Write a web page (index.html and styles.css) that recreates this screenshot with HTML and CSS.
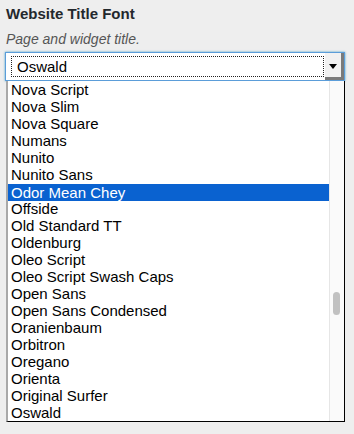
FILE: index.html
```html
<!DOCTYPE html>
<html lang="en">
<head>
  <meta charset="UTF-8" />
  <meta name="viewport" content="width=device-width, initial-scale=1" />
  <title>Website Title Font</title>
  <link rel="stylesheet" href="styles.css">
</head>
<body>
  <div class="field">
    <h3 class="field-title">Website Title Font</h3>
    <p class="field-desc">Page and widget title.</p>

    <div class="select">
      <div class="select-value"><span>Oswald</span></div>
      <div class="select-arrow"><span class="arrow"></span></div>
    </div>

    <div class="dropdown">
      <ul class="options">
        <li>Nova Script</li>
        <li>Nova Slim</li>
        <li>Nova Square</li>
        <li>Numans</li>
        <li>Nunito</li>
        <li>Nunito Sans</li>
        <li class="selected">Odor Mean Chey</li>
        <li>Offside</li>
        <li>Old Standard TT</li>
        <li>Oldenburg</li>
        <li>Oleo Script</li>
        <li>Oleo Script Swash Caps</li>
        <li>Open Sans</li>
        <li>Open Sans Condensed</li>
        <li>Oranienbaum</li>
        <li>Orbitron</li>
        <li>Oregano</li>
        <li>Orienta</li>
        <li>Original Surfer</li>
        <li>Oswald</li>
      </ul>
      <div class="scrollbar">
        <div class="thumb"></div>
      </div>
    </div>
  </div>
</body>
</html>
```

FILE: styles.css
```css
body {
  margin: 0;
  background-color: #eeeeee;
  font-family: "Liberation Sans", Arial, sans-serif;
  color: #23282d;
}

.field {
  padding: 4px 9px 0 5px;
}

.field-title {
  margin: 0 0 0 1px;
  font-size: 15px;
  font-weight: bold;
  line-height: 20px;
}

.field-desc {
  margin: 7px 0 0 1px;
  font-size: 14px;
  font-style: italic;
  line-height: 16px;
  color: #555;
}

.select {
  display: flex;
  height: 27px;
  margin-top: 5px;
  background: white;
  border: 1px solid #5b9dd9;
  box-shadow: 0 0 2px rgba(30, 140, 190, 0.8);
}

.select-value {
  flex: 1;
  display: flex;
  align-items: center;
  margin: 3px 0 3px 5px;
  padding-left: 5px;
  border: 1px dotted #222;
  font-size: 15px;
  color: #000;
}

.select-arrow {
  width: 16px;
  display: flex;
  align-items: center;
  justify-content: center;
  background: #f1f1f1;
  border-right: 3px solid #7a7a7a;
  border-bottom: 3px solid #7a7a7a;
  margin-left: 1px;
}

.arrow {
  width: 0;
  height: 0;
  border-left: 4px solid transparent;
  border-right: 4px solid transparent;
  border-top: 5px solid #000;
  margin-top: 2px;
}

.dropdown {
  display: flex;
  margin-left: 1px;
  height: 340px;
  background: white;
  border-left: 2px solid #a9a9a9;
  border-right: 1px solid #000;
  border-bottom: 1px solid #000;
}

.options {
  flex: 1;
  list-style: none;
  margin: 0;
  padding: 0;
  font-size: 15px;
  line-height: 17px;
  color: #000;
}

.options li {
  padding-left: 3px;
  white-space: nowrap;
}

.options li.selected {
  margin-top: 1px;
  margin-bottom: -1px;
  background-color: #0a62d0;
  color: white;
}

.scrollbar {
  width: 14px;
  background: #fafafa;
  border-left: 1px solid #e6e6e6;
}

.thumb {
  width: 7px;
  height: 23px;
  margin: 211px 0 0 3px;
  background: #c1c1c1;
  border-radius: 4px;
}
```
